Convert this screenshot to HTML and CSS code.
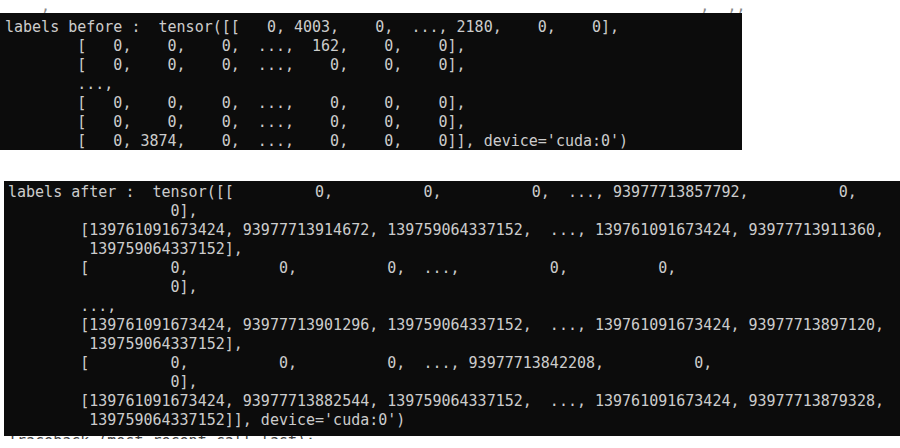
FILE: index.html
```html
<!DOCTYPE html>
<html lang="en">
<head>
<meta charset="utf-8">
<title>labels before / after</title>
<link rel="stylesheet" href="styles.css">
</head>
<body>
<pre class="sliver sliver-top">    ,                                                                        ,  ,,</pre>
<pre class="term term-before">labels before :  tensor([[   0, 4003,    0,  ..., 2180,    0,    0],
        [   0,    0,    0,  ...,  162,    0,    0],
        [   0,    0,    0,  ...,    0,    0,    0],
        ...,
        [   0,    0,    0,  ...,    0,    0,    0],
        [   0,    0,    0,  ...,    0,    0,    0],
        [   0, 3874,    0,  ...,    0,    0,    0]], device='cuda:0')</pre>
<pre class="term term-after">labels after :  tensor([[         0,          0,          0,  ..., 93977713857792,          0,
                  0],
        [139761091673424, 93977713914672, 139759064337152,  ..., 139761091673424, 93977713911360,
         139759064337152],
        [         0,          0,          0,  ...,          0,          0,
                  0],
        ...,
        [139761091673424, 93977713901296, 139759064337152,  ..., 139761091673424, 93977713897120,
         139759064337152],
        [         0,          0,          0,  ..., 93977713842208,          0,
                  0],
        [139761091673424, 93977713882544, 139759064337152,  ..., 139761091673424, 93977713879328,
         139759064337152]], device='cuda:0')</pre>
<pre class="sliver sliver-bottom">Traceback (most recent call last):</pre>
</body>
</html>
```
FILE: styles.css
```css
html, body {
  margin: 0;
  padding: 0;
  background: #ffffff;
}

body {
  font-family: "DejaVu Sans Mono", "Liberation Mono", monospace;
  font-size: 15px;
}

pre {
  margin: 0;
  font: inherit;
  white-space: pre;
}

.term {
  background: #0c0c0c;
  color: #cccccc;
  line-height: 19px;
  overflow: hidden;
  box-sizing: border-box;
}

.term-before {
  width: 742px;
  height: 137px;
  padding: 5px 0 0 5px;
}

.term-after {
  margin: 31px 0 0 4px;
  height: 255px;
  padding: 2px 0 0 4px;
}

.sliver {
  overflow: hidden;
}

.sliver-top {
  height: 13px;
  line-height: 13.7px;
  padding-left: 5px;
  color: #8a8a8a;
}

.sliver-bottom {
  height: 3px;
  line-height: 11px;
  padding-left: 8px;
  color: #444444;
}
```
